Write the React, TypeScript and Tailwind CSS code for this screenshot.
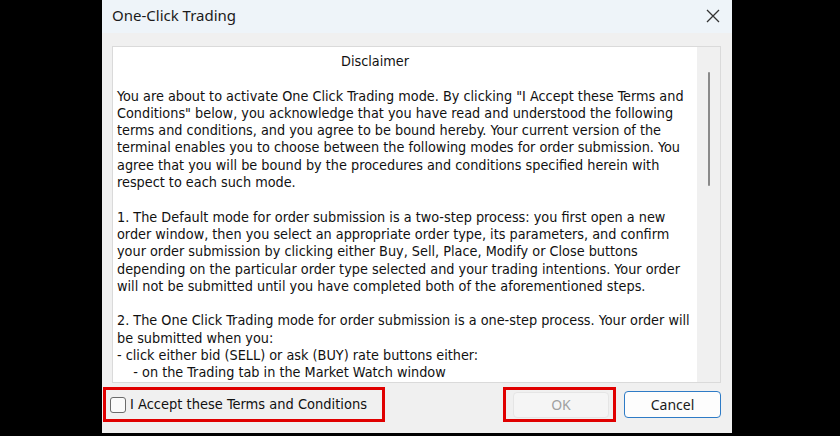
const body = "'DejaVu Sans Condensed','DejaVu Sans',Tahoma,sans-serif";
const ui = "'Noto Sans','Open Sans',sans-serif";

const lines: string[] = [
  'You are about to activate One Click Trading mode. By clicking "I Accept these Terms and',
  'Conditions" below, you acknowledge that you have read and understood the following',
  "terms and conditions, and you agree to be bound hereby. Your current version of the",
  "terminal enables you to choose between the following modes for order submission. You",
  "agree that you will be bound by the procedures and conditions specified herein with",
  "respect to each such mode.",
  "",
  "1. The Default mode for order submission is a two-step process: you first open a new",
  "order window, then you select an appropriate order type, its parameters, and confirm",
  "your order submission by clicking either Buy, Sell, Place, Modify or Close buttons",
  "depending on the particular order type selected and your trading intentions. Your order",
  "will not be submitted until you have completed both of the aforementioned steps.",
  "",
  "2. The One Click Trading mode for order submission is a one-step process. Your order will",
  "be submitted when you:",
  "- click either bid (SELL) or ask (BUY) rate buttons either:",
  "    - on the Trading tab in the Market Watch window",
];

export default function App() {
  return (
    <div className="flex h-[436px] w-[840px] bg-black pl-[102px]">
      <div className="flex h-[433px] w-[630px] flex-col bg-[#f0f0f0]">
        {/* title bar */}
        <div className="flex h-[33px] items-center justify-between bg-[#eef4f9] pb-[3px] pl-[10px] pr-[10px]">
          <span className="text-[15px] text-[#1b1b1b]" style={{ fontFamily: ui }}>
            One-Click Trading
          </span>
          <svg width="16" height="16" viewBox="0 0 16 16" className="mr-[1px] mt-[2px]">
            <path d="M2 2 L14 14 M14 2 L2 14" stroke="#333" strokeWidth="1.3" fill="none" />
          </svg>
        </div>

        {/* text box */}
        <div className="mx-[10px] mt-[13px] flex h-[337px] w-[609px] border border-[#dadada] bg-white">
          <div
            className="flex-1 overflow-hidden pl-[4px] pt-[6px] text-[14.3px] leading-[17.3px] text-[#111]"
            style={{ fontFamily: body }}
          >
            <div className="pl-[224px] whitespace-pre">Disclaimer</div>
            <div className="whitespace-pre"> </div>
            {lines.map((l, i) => (
              <div key={i} className="whitespace-pre">
                {l === "" ? " " : l}
              </div>
            ))}
          </div>
          <div className="flex w-[23px] justify-center bg-[#f0f0f0] pt-[25px]">
            <div className="h-[114px] w-[2px] rounded-full bg-[#8a8a8a]" />
          </div>
        </div>

        {/* bottom row */}
        <div className="mt-[4px] flex items-start">
          <div className="ml-[1px] flex h-[35px] w-[282px] items-center border-[3px] border-[#e00000] pl-[4px]">
            <div className="h-[16px] w-[16px] rounded-[3px] border border-[#6b6b6b] bg-[#fafafa]" />
            <span className="ml-[4px] text-[14.5px] text-[#111]" style={{ fontFamily: body }}>
              I Accept these Terms and Conditions
            </span>
          </div>
          <div className="ml-[118px] flex h-[35px] w-[113px] items-center border-[3px] border-[#e00000] pl-[7px]">
            <div
              className="flex h-[26px] w-[96px] items-center justify-center rounded-[4px] border border-[#e5e5e5] bg-[#f5f5f5] text-[14px] text-[#a0a0a0]"
              style={{ fontFamily: ui }}
            >
              OK
            </div>
          </div>
          <div
            className="ml-[8px] mt-[4px] flex h-[27px] w-[97px] items-center justify-center rounded-[4px] border border-[#2e7bc6] bg-[#fdfdfd] text-[14px] text-[#1b1b1b]"
            style={{ fontFamily: ui }}
          >
            Cancel
          </div>
        </div>
      </div>
    </div>
  );
}
